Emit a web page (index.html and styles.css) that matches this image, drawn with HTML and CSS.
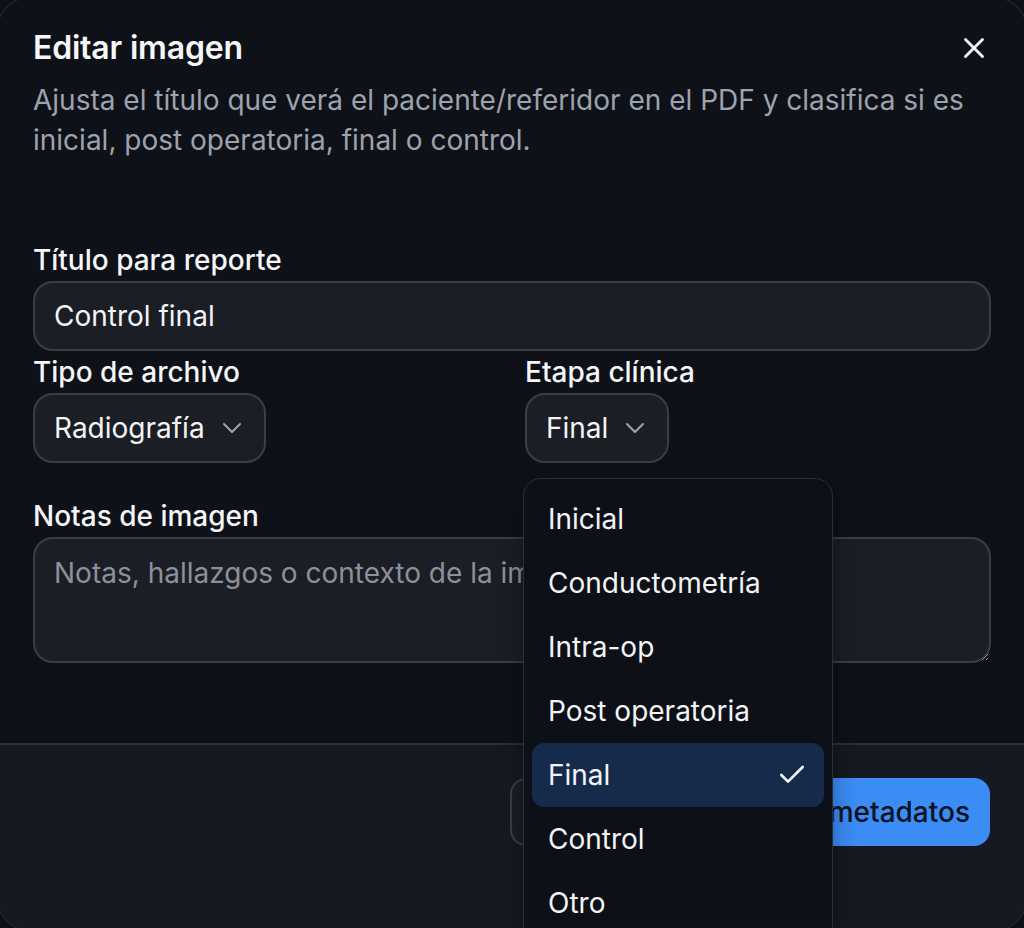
FILE: index.html
```html
<!DOCTYPE html>
<html lang="es">
<head>
<meta charset="utf-8">
<title>Editar imagen</title>
<link rel="stylesheet" href="styles.css">
</head>
<body>
<div class="dialog">
  <div class="main">
    <header class="head">
      <div class="title-row">
        <h2 class="title">Editar imagen</h2>
        <button class="close" type="button" aria-label="Cerrar">
          <svg viewBox="0 0 24 24" width="34" height="34" fill="none" stroke="currentColor" stroke-width="2" stroke-linecap="round" stroke-linejoin="round"><path d="M18 6 6 18"/><path d="m6 6 12 12"/></svg>
        </button>
      </div>
      <p class="desc">Ajusta el título que verá el paciente/referidor en el PDF y clasifica si es inicial, post operatoria, final o control.</p>
    </header>
    <form class="form">
      <div class="field">
        <label class="label">Título para reporte</label>
        <input class="input" type="text" value="Control final">
      </div>
      <div class="row2">
        <div class="field">
          <label class="label">Tipo de archivo</label>
          <div class="select-wrap">
            <button class="select" type="button">
              <span>Radiografía</span>
              <svg class="chev" viewBox="0 0 24 24" width="32" height="32" fill="none" stroke="currentColor" stroke-width="1.5" stroke-linecap="round" stroke-linejoin="round"><path d="m6 9 6 6 6-6"/></svg>
            </button>
          </div>
        </div>
        <div class="field">
          <label class="label">Etapa clínica</label>
          <div class="select-wrap">
            <button class="select" type="button">
              <span>Final</span>
              <svg class="chev" viewBox="0 0 24 24" width="32" height="32" fill="none" stroke="currentColor" stroke-width="1.5" stroke-linecap="round" stroke-linejoin="round"><path d="m6 9 6 6 6-6"/></svg>
            </button>
            <div class="menu">
              <div class="item">Inicial</div>
              <div class="item">Conductometría</div>
              <div class="item">Intra-op</div>
              <div class="item">Post operatoria</div>
              <div class="item active">Final
                <svg class="check" viewBox="0 0 24 24" width="32" height="32" fill="none" stroke="currentColor" stroke-width="2" stroke-linecap="round" stroke-linejoin="round"><path d="M20 6 9 17l-5-5"/></svg>
              </div>
              <div class="item">Control</div>
              <div class="item">Otro</div>
            </div>
          </div>
        </div>
      </div>
      <div class="field notes">
        <label class="label">Notas de imagen</label>
        <textarea class="textarea" placeholder="Notas, hallazgos o contexto de la imagen"></textarea>
      </div>
    </form>
  </div>
  <footer class="foot">
    <button class="btn btn-outline" type="button">Cancelar</button>
    <button class="btn btn-primary" type="button">Guardar metadatos</button>
  </footer>
</div>
</body>
</html>
```
FILE: styles.css
```css
* { box-sizing: border-box; }
html, body { margin: 0; padding: 0; }
body {
  background: #0d1015;
  font-family: Inter, "Noto Sans", sans-serif;
  color: #f3f4f6;
  overflow: hidden;
  color-scheme: dark;
  height: 928px;
}
.dialog {
  margin: -3px;
  width: 1030px;
  height: 934px;
  border: 1px solid #30343c;
  border-radius: 32px;
  background: #0e1117;
  display: flex;
  flex-direction: column;
  overflow: hidden;
}
.main {
  padding: 26px 35px 80px 35px;
}
.head { display: flex; flex-direction: column; }
.title-row {
  display: flex;
  align-items: center;
  justify-content: space-between;
  height: 48px;
}
.title {
  margin: 0;
  font-size: 32px;
  font-weight: 600;
  line-height: 48px;
  letter-spacing: -0.2px;
  color: #f5f6f8;
}
.close {
  background: none;
  border: 0;
  padding: 0;
  margin-right: 0;
  color: #f3f4f6;
  display: flex;
}
.desc {
  margin: 8px 0 0 0;
  font-size: 28px;
  line-height: 40px;
  color: #9ca3af;
}
.form {
  display: flex;
  flex-direction: column;
  margin-top: 86px;
}
.field { display: flex; flex-direction: column; }
.label {
  font-size: 28px;
  font-weight: 500;
  line-height: 28px;
  margin-bottom: 7px;
  color: #f5f6f8;
}
.input {
  height: 70px;
  border: 2px solid #3a3e46;
  border-radius: 20px;
  background: #1b1e25;
  color: #f3f4f6;
  font: 400 28px/40px Inter, sans-serif;
  padding: 0 19px;
  outline: none;
}
.row2 {
  display: grid;
  grid-template-columns: 1fr 1fr;
  column-gap: 26px;
  margin-top: 7px;
}
.select-wrap {
  position: relative;
  display: flex;
}
.select {
  height: 70px;
  display: flex;
  align-items: center;
  gap: 11px;
  border: 2px solid #3a3e46;
  border-radius: 20px;
  background: #1b1e25;
  color: #f3f4f6;
  font: 400 28px/40px Inter, sans-serif;
  padding: 0 16px 0 19px;
}
.chev { color: #a0a6b1; }
.menu {
  position: absolute;
  top: 85px;
  left: -2px;
  width: 310px;
  background: #0d1016;
  border: 1.5px solid #2b2f37;
  border-radius: 18px;
  padding: 8px;
  z-index: 10;
  box-shadow: 0 8px 24px rgba(0,0,0,0.35);
}
.item {
  height: 64px;
  display: flex;
  align-items: center;
  justify-content: space-between;
  padding: 0 16px 0 16px;
  font-size: 28px;
  color: #f3f4f6;
  border-radius: 12px;
}
.item.active { background: #162a4b; }
.check { color: #f3f4f6; }
.notes { margin-top: 39px; }
.textarea {
  height: 126px;
  border: 2px solid #3a3e46;
  border-radius: 20px;
  background: #1b1e25;
  color: #f3f4f6;
  font: 400 28px/40px Inter, sans-serif;
  padding: 14px 19px;
  resize: vertical;
  outline: none;
}
.textarea::placeholder { color: #8b919c; }
.foot {
  flex: 1;
  border-top: 2px solid #2b2f36;
  background: #151921;
  display: flex;
  justify-content: flex-end;
  align-items: flex-start;
  gap: 16px;
  padding: 33px 36px 0 36px;
}
.btn {
  height: 68px;
  border-radius: 16px;
  font: 500 28px/40px Inter, sans-serif;
  padding: 0 20px;
}
.btn-outline {
  background: #1b1e25;
  border: 2px solid #3a3e46;
  color: #f3f4f6;
  padding: 0 22px;
}
.btn-primary {
  background: #3b8cf5;
  border: 0;
  color: #0b1220;
}
```
